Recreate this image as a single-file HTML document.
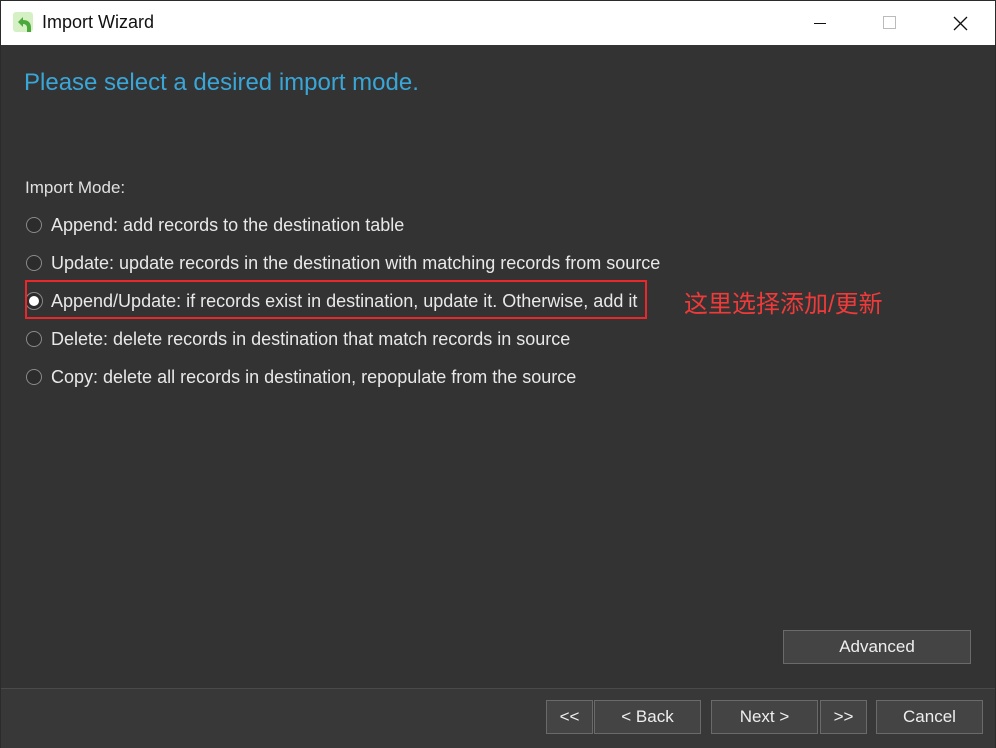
<!DOCTYPE html>
<html><head><meta charset="utf-8"><style>
body{margin:0;width:996px;height:748px;overflow:hidden;font-family:"Segoe UI","Liberation Sans","Noto Sans CJK SC",sans-serif;}
#w{position:absolute;left:0;top:0;width:994px;height:746px;border:1px solid #2b2b2b;background:#333333;}
#tb{position:absolute;left:0;top:0;width:994px;height:44px;background:#fff;}
.t{position:absolute;white-space:nowrap;}
.btn{position:absolute;background:#444;border:1px solid #6a6a6a;box-sizing:border-box;color:#eee;font-size:17px;text-align:center;line-height:31px;}
.r{position:absolute;left:25px;width:16px;height:16px;border:1px solid #8a8a8a;border-radius:50%;box-sizing:border-box;background:#2c2c2c;}
.l{position:absolute;left:50px;color:#e8e8e8;font-size:18px;white-space:nowrap;}
</style></head><body><div id="w">
<div id="tb">
<div style="position:absolute;left:12px;top:11px;width:20px;height:20px;background:#d6f0c6;border-radius:3px"></div>
<svg style="position:absolute;left:13px;top:13px" width="22" height="22" viewBox="0 0 22 22"><path d="M4 8 L9 3 L9 6 Q17 6 17 14 L17 18 L13 18 L13 14 Q13 10 9 10 L9 13 Z" fill="#4aa93a"/></svg>
<div class="t" style="left:41px;top:11px;font-size:18px;color:#111">Import Wizard</div>
<div style="position:absolute;left:813px;top:22px;width:12px;height:1px;background:#111"></div>
<div style="position:absolute;left:882px;top:15px;width:13px;height:13px;border:1px solid #bbb;box-sizing:border-box"></div>
<svg style="position:absolute;left:952px;top:15px" width="15" height="15"><path d="M1 1L14 14M14 1L1 14" stroke="#111" stroke-width="1.3"/></svg>
</div>
<div class="t" style="left:23px;top:68px;font-size:24px;color:#3aa6d8">Please select a desired import mode.</div>
<div class="t" style="left:24px;top:177px;font-size:17px;color:#e0e0e0">Import Mode:</div>
<div class="r" style="top:216px"></div><div class="l" style="top:214px">Append: add records to the destination table</div>
<div class="r" style="top:254px"></div><div class="l" style="top:252px">Update: update records in the destination with matching records from source</div>
<div class="r" style="top:292px;background:#fff;border:3px solid #2c2c2c;box-shadow:0 0 0 1px #888"></div><div class="l" style="top:290px">Append/Update: if records exist in destination, update it. Otherwise, add it</div>
<div class="r" style="top:330px"></div><div class="l" style="top:328px">Delete: delete records in destination that match records in source</div>
<div class="r" style="top:368px"></div><div class="l" style="top:366px">Copy: delete all records in destination, repopulate from the source</div>
<div style="position:absolute;left:24px;top:279px;width:622px;height:39px;border:2px solid #e8282a;box-sizing:border-box"></div>
<div class="t" style="left:683px;top:283px;font-size:24px;color:#f03a3a">这里选择添加/更新</div>
<div class="btn" style="left:782px;top:629px;width:188px;height:34px">Advanced</div>
<div style="position:absolute;left:0;top:687px;width:994px;height:59px;background:#383838;border-top:1px solid #4a4a4a"></div>
<div class="btn" style="left:545px;top:699px;width:47px;height:34px">&lt;&lt;</div>
<div class="btn" style="left:593px;top:699px;width:107px;height:34px">&lt; Back</div>
<div class="btn" style="left:710px;top:699px;width:107px;height:34px">Next &gt;</div>
<div class="btn" style="left:819px;top:699px;width:47px;height:34px">&gt;&gt;</div>
<div class="btn" style="left:875px;top:699px;width:107px;height:34px">Cancel</div>
</div></body></html>
